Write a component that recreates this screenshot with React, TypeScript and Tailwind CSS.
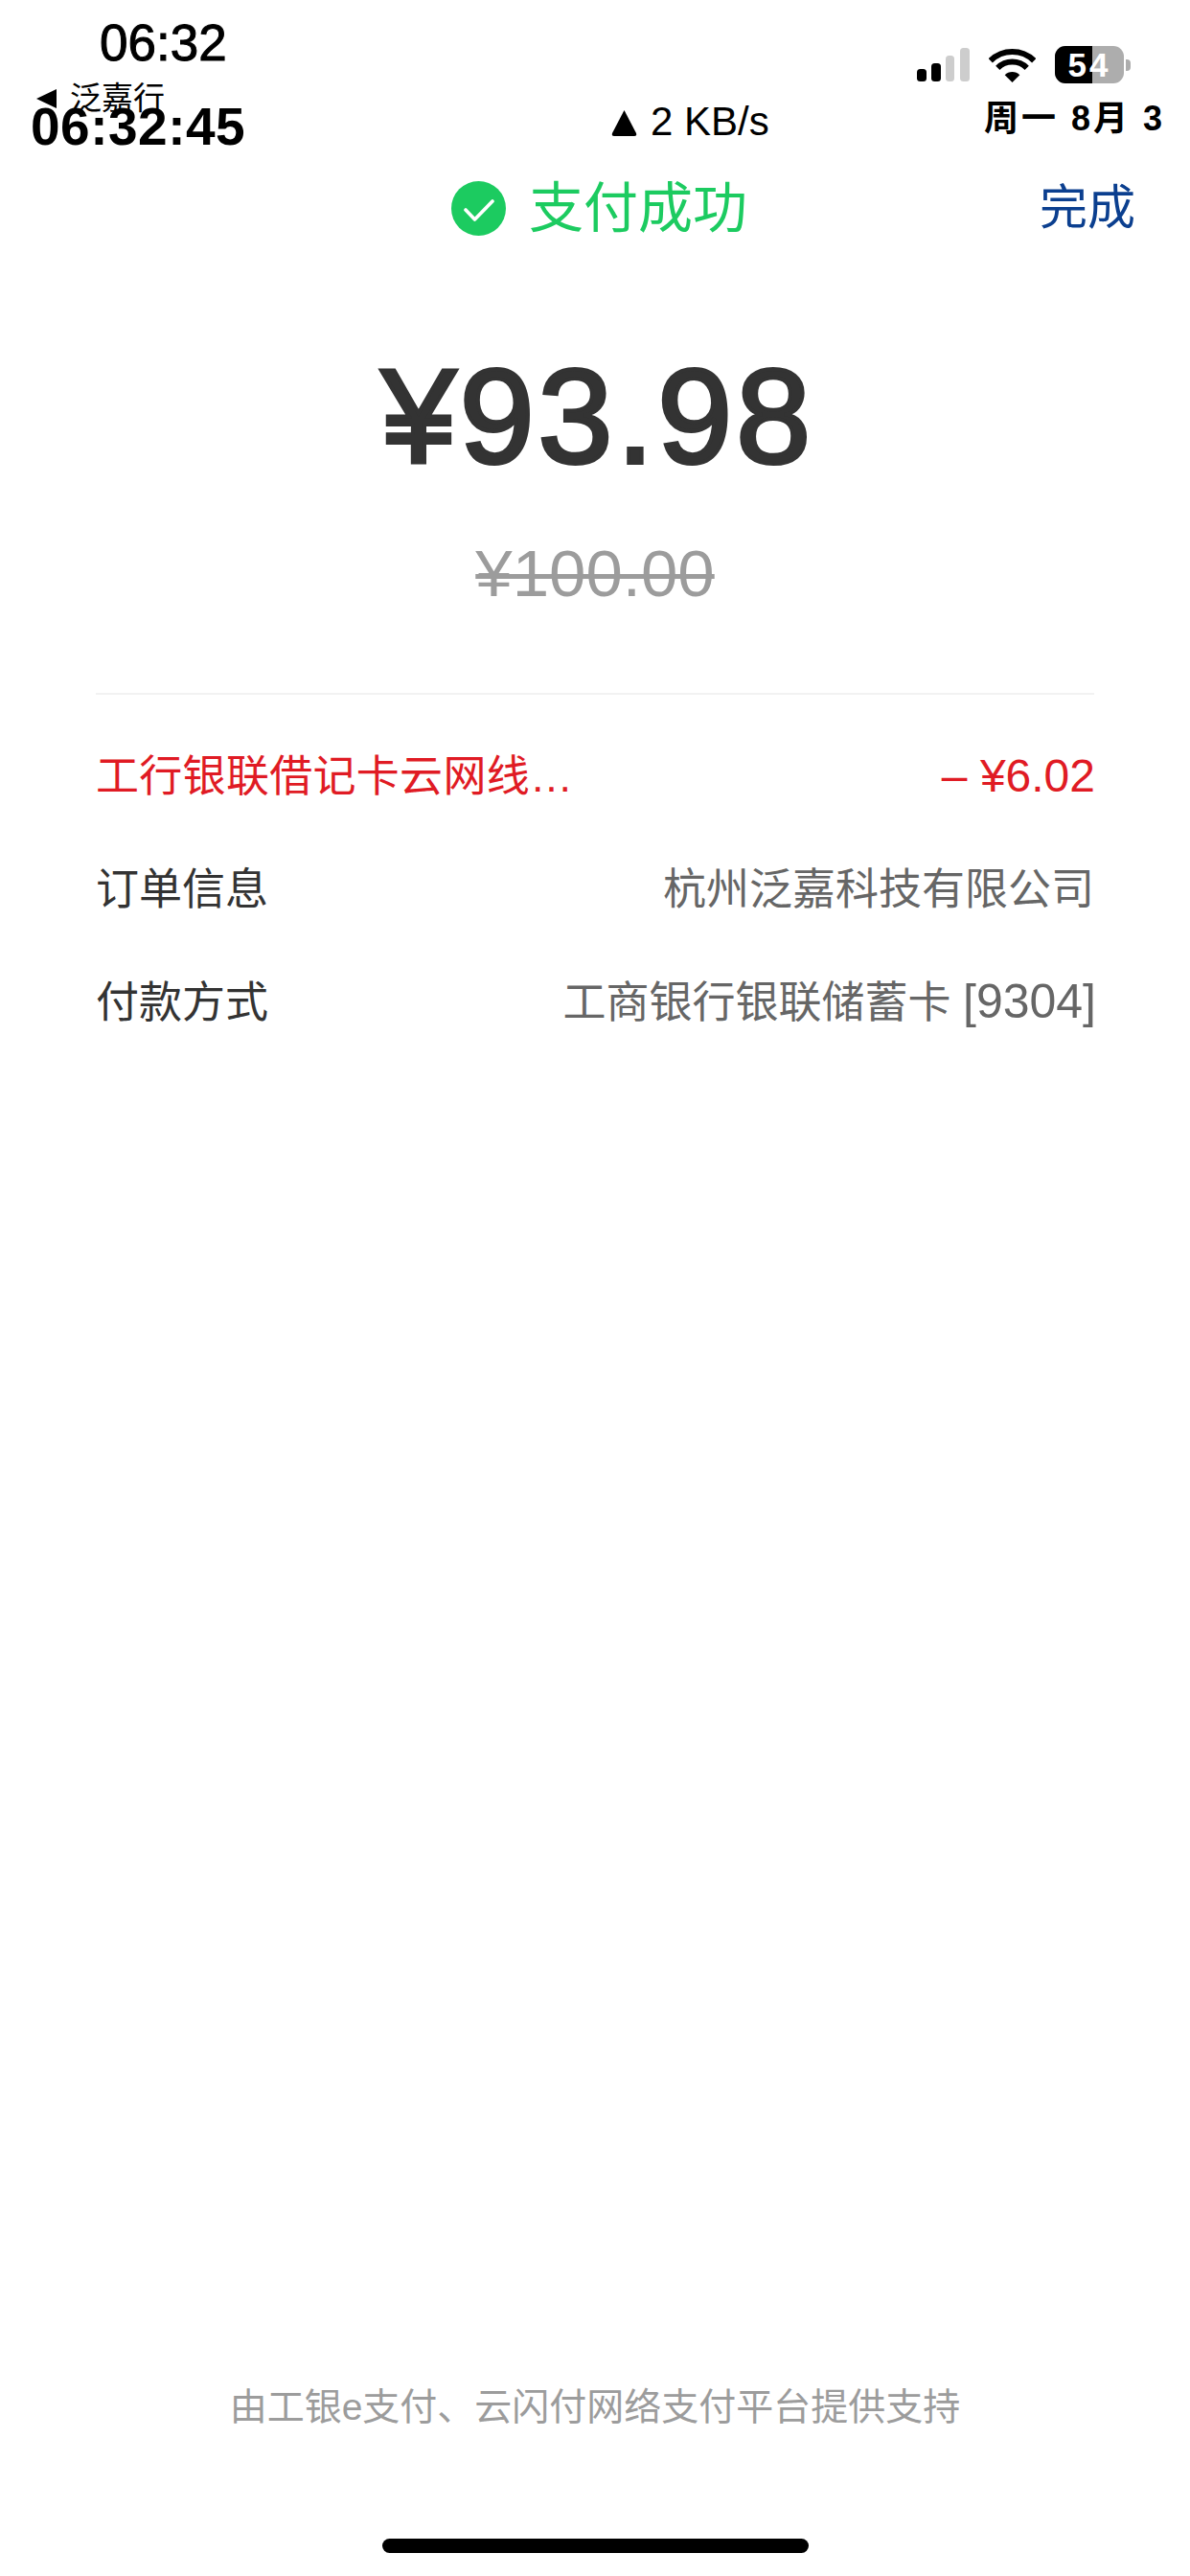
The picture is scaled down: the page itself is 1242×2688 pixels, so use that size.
import type { ReactNode } from "react";

const FONT = "font-['Liberation_Sans','Noto_Sans_CJK_SC',sans-serif]";

function SignalIcon() {
  return (
    <svg width="55" height="35" viewBox="0 0 55 35" aria-hidden="true">
      <rect x="0" y="22" width="10" height="13" rx="3.5" fill="#000" />
      <rect x="15" y="16" width="10" height="19" rx="3.5" fill="#000" />
      <rect x="30" y="8" width="9" height="27" rx="3.5" fill="#cdcdcd" />
      <rect x="45" y="0" width="10" height="35" rx="3.5" fill="#cdcdcd" />
    </svg>
  );
}

function WifiIcon() {
  return (
    <svg width="49" height="36" viewBox="0 0 49 36" fill="none" aria-hidden="true">
      <path d="M1.8 13.3A32.5 32.5 0 0 1 47.2 13.3" stroke="#000" strokeWidth="6" />
      <path d="M9.3 20.8A21.5 21.5 0 0 1 39.7 20.8" stroke="#000" strokeWidth="6" />
      <path d="M24.5 36L16.7 28.2A11 11 0 0 1 32.3 28.2Z" fill="#000" />
    </svg>
  );
}

function Battery() {
  return (
    <div className="flex items-center">
      <div className="relative flex h-[39px] w-[72px] overflow-hidden rounded-[11px] bg-[#adadad]">
        <div className="h-full w-[39px] bg-black" />
        <span className="absolute inset-0 flex items-center justify-center text-[35px] leading-none font-bold tracking-[3px] text-white">
          54
        </span>
      </div>
      <div className="ml-[2px] h-[12px] w-[5px] rounded-r-[4px] bg-[#adadad]" />
    </div>
  );
}

function StatusBar() {
  return (
    <div className="flex h-[160px] text-black">
      <div className="flex w-[638px] flex-col pl-[32px]">
        <div className="mt-[19px] ml-[72px] text-[53px] leading-[52px] [-webkit-text-stroke:1px_#000]">06:32</div>
        <div className="mt-[15px] ml-[6px] flex items-center gap-[14px] text-[33px] leading-[33px]">
          <svg width="21" height="20" viewBox="0 0 21 20" aria-hidden="true">
            <path d="M21 0V20L0 10Z" fill="#000" />
          </svg>
          <span>泛嘉行</span>
        </div>
        <div className="mt-[-14px] text-[55px] leading-[55px] font-bold tracking-[0.5px]">06:32:45</div>
      </div>

      <div className="flex h-[148px] w-[319px] items-start gap-[14px] pt-[106px] text-[42px] leading-[42px]">
        <svg className="mt-[8px]" width="27" height="28" viewBox="0 0 27 28" aria-hidden="true">
          <path d="M13.5 1L26 25Q27 28 24 28H3Q0 28 1 25Z" fill="#000" />
        </svg>
        <span>2 KB/s</span>
      </div>

      <div className="flex flex-col">
        <div className="mt-[48px] flex items-center">
          <SignalIcon />
          <div className="mx-[20px]">
            <WifiIcon />
          </div>
          <Battery />
        </div>
        <div className="mt-[19px] ml-[70px] text-[36px] leading-[36px] font-bold tracking-[3px]">
          周一 8月 3
        </div>
      </div>
    </div>
  );
}

function SuccessTitle() {
  return (
    <div className="mt-[27px] flex h-[60px] items-center pr-[57px] pl-[471px]">
      <svg width="57" height="57" viewBox="0 0 57 57" aria-hidden="true">
        <circle cx="28.5" cy="28.5" r="28.5" fill="#1ccb60" />
        <path d="M15 30L24.5 40L43 21" fill="none" stroke="#fff" strokeWidth="3.6" strokeLinecap="round" strokeLinejoin="round" />
      </svg>
      <span className="ml-[24px] text-[57px] leading-[60px] text-[#1ccb60]">支付成功</span>
      <span className="ml-auto text-[50px] leading-[60px] text-[#0b3f8f]">完成</span>
    </div>
  );
}

function Row({ label, value, red }: { label: string; value: ReactNode; red?: boolean }) {
  return (
    <div className={`flex h-[118px] items-center justify-between text-[45px] leading-[45px] ${red ? "text-[#e01b24]" : "text-[#666]"}`}>
      <span className={red ? "tracking-[0.3px]" : "text-[#333]"}>{label}</span>
      <span className="whitespace-nowrap">{value}</span>
    </div>
  );
}

export default function App() {
  return (
    <div className={`flex h-[2688px] w-[1242px] flex-col bg-white ${FONT}`}>
      <StatusBar />
      <SuccessTitle />

      <div className="mt-[118px] pl-[6px] text-center text-[140px] leading-[140px] tracking-[4px] text-[#333] [-webkit-text-stroke:4px_#333]">
        ¥93.98
      </div>
      <div className="mt-[59px] text-center text-[69px] leading-[69px] text-[#9c9c9c] line-through decoration-[5px]">
        ¥100.00
      </div>

      <div className="mx-[100px] mt-[90px] h-[2px] bg-[#f2f2f2]" />

      <div className="mx-[100px] mt-[26px] flex flex-col">
        <Row label="工行银联借记卡云网线…" value={<span className="mr-[-1px] text-[48px]">– ¥6.02</span>} red />
        <Row label="订单信息" value="杭州泛嘉科技有限公司" />
        <Row
          label="付款方式"
          value={
            <>
              工商银行银联储蓄卡 <span className="mr-[-2px] text-[50px]">[9304]</span>
            </>
          }
        />
      </div>

      <div className="mt-auto text-center text-[39px] leading-[39px] text-[#9c9c9c]">
        由工银e支付、云闪付网络支付平台提供支持
      </div>
      <div className="mx-auto mt-[118px] mb-[24px] h-[15px] w-[445px] rounded-full bg-black" />
    </div>
  );
}
